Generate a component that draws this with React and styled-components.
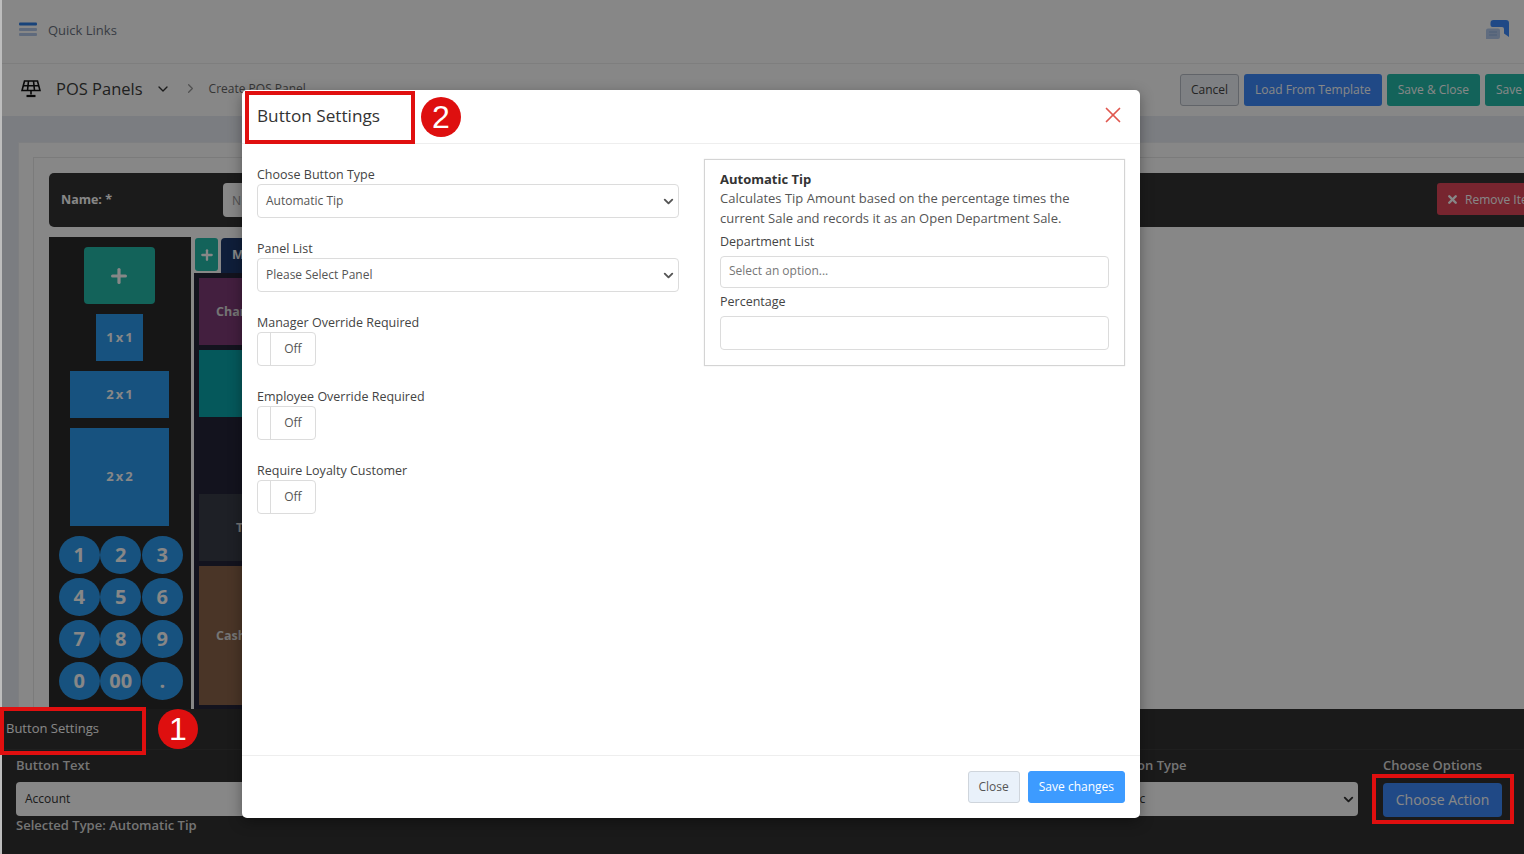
import React from "react";
import styled, { createGlobalStyle } from "styled-components";
import { ChevronDown, ChevronRight, X, Plus } from "lucide-react";

const GlobalStyle = createGlobalStyle`
    * {
        box-sizing: border-box;
    }
    html,
    body {
        margin: 0;
        padding: 0;
        height: 854px;
        overflow: hidden;
        background: #fff;
        font-family: "Open Sans", "Liberation Sans", sans-serif;
    }
`;

const Page = styled.div`
    position: relative;
    width: 1524px;
    height: 854px;
    padding-left: 2px;
    overflow: hidden;
    display: flex;
    flex-direction: column;
    background: #bdbdbd;
`;

const TopBar = styled.div`
    height: 64px;
    flex: none;
    display: flex;
    align-items: center;
    justify-content: space-between;
    padding: 0 14px 4px 17px;
    background: #fff;
    border-bottom: 1px solid #eee;
`;

const QuickLinks = styled.div`
    display: flex;
    align-items: center;
    gap: 11px;
    font-size: 13px;
    color: #6b7280;
`;

const SubBar = styled.div`
    height: 52px;
    flex: none;
    display: flex;
    align-items: center;
    justify-content: space-between;
    padding-left: 19px;
    background: #fff;
`;

const Crumbs = styled.div`
    display: flex;
    align-items: center;
    margin-bottom: 3px;
    color: #333;
`;

const PageTitle = styled.span`
    font-size: 16.5px;
    margin: 0 12px 0 15px;
    color: #3d3d3d;
`;

const CrumbChevron = styled(ChevronRight)`
    margin-left: 12px;
`;

const CrumbText = styled.span`
    font-size: 12px;
    color: #666;
    margin-left: 11px;
`;

const Actions = styled.div`
    display: flex;
    gap: 5px;
    width: 344px;
    flex: none;
    overflow: hidden;
`;

const TopButton = styled.div`
    height: 32px;
    padding: 0 10px 2px;
    flex: none;
    display: flex;
    align-items: center;
    font-size: 12px;
    border-radius: 3px;
    color: ${(p) => (p.$variant === "light" ? "#444" : "#fff")};
    background: ${(p) =>
        p.$variant === "blue"
            ? "#3d8bfd"
            : p.$variant === "teal"
            ? "#24bcab"
            : "#eef2f7"};
    border: 1px solid ${(p) => (p.$variant === "light" ? "#b8bdc6" : "transparent")};
`;

const Content = styled.div`
    flex: 1;
    min-height: 0;
    background: #e9edf3;
    padding: 26px 0 0 16px;
`;

const Card = styled.div`
    height: 100%;
    background: #fff;
    border: 1px solid #eef0f3;
    border-right: none;
    border-bottom: none;
    padding: 14px 0 0 14px;
`;

const InnerCard = styled.div`
    height: 100%;
    background: #fff;
    border: 1px solid #e8e8e8;
    border-right: none;
    border-bottom: none;
    padding: 15px 0 0 15px;
`;

const NameBar = styled.div`
    height: 54px;
    display: flex;
    align-items: center;
    justify-content: space-between;
    background: #343434;
    border-radius: 5px 0 0 5px;
    padding-left: 12px;
`;

const NameLabel = styled.span`
    width: 162px;
    padding-bottom: 2px;
    font-size: 12.5px;
    font-weight: 700;
    color: #fff;
`;

const NameField = styled.div`
    flex: none;
    width: 40px;
    height: 34px;
    padding-left: 9px;
    display: flex;
    align-items: center;
    font-size: 12px;
    color: #999;
    background: #fff;
    border-radius: 4px 0 0 4px;
`;

const RemoveButton = styled.div`
    width: 87px;
    height: 32px;
    margin: 0 0 2px auto;
    padding-left: 9px;
    display: flex;
    align-items: center;
    gap: 6px;
    white-space: nowrap;
    overflow: hidden;
    font-size: 12px;
    color: #fff;
    background: #e0465a;
    border-radius: 3px 0 0 3px;
`;

const RemoveIcon = styled(X)`
    flex: none;
`;

const Editor = styled.div`
    margin-top: 10px;
    display: flex;
    height: 472px;
`;

const Palette = styled.div`
    width: 142px;
    flex: none;
    background: #2b2b2b;
    display: flex;
    flex-direction: column;
    align-items: center;
    padding: 10px 2px 0 0;
`;

const AddTile = styled.div`
    width: 71px;
    height: 57px;
    display: flex;
    align-items: center;
    justify-content: center;
    color: #fff;
    background: #24bcab;
    border-radius: 4px;
`;

const SizeTile = styled.div`
    width: ${(p) => p.$w}px;
    height: ${(p) => p.$h}px;
    margin-top: 10px;
    padding: 0 0 2px 3px;
    display: flex;
    align-items: center;
    justify-content: center;
    font-size: 13px;
    font-weight: 700;
    letter-spacing: 2px;
    color: #fff;
    background: #2d9cf0;
`;

const NumPad = styled.div`
    margin: 10px 0 0 4px;
    display: grid;
    grid-template-columns: repeat(3, 41.5px);
    grid-auto-rows: 38px;
    row-gap: 4px;
    justify-content: center;
`;

const NumKey = styled.div`
    width: 41px;
    height: 38px;
    padding-bottom: 1px;
    display: flex;
    align-items: center;
    justify-content: center;
    font-size: 20px;
    font-weight: 700;
    color: #fff;
    background: #2d9cf0;
    border-radius: 50%;
`;

const Divider = styled.div`
    width: 3px;
    flex: none;
    background: #fff;
`;

const TileColumn = styled.div`
    width: 800px;
    flex: none;
    display: flex;
    flex-direction: column;
    overflow: hidden;
`;

const TabRow = styled.div`
    height: 36px;
    flex: none;
    display: flex;
    gap: 3px;
    padding: 1px 0 0 1px;
    background: #fff;
`;

const AddTab = styled.div`
    width: 23px;
    height: 33px;
    display: flex;
    align-items: center;
    justify-content: center;
    color: #fff;
    background: #24bcab;
    border-radius: 3px;
`;

const MenuTab = styled.div`
    width: 60px;
    height: 35px;
    padding: 0 0 3px 11px;
    display: flex;
    align-items: center;
    font-size: 13px;
    font-weight: 700;
    color: #fff;
    background: #1d3a6e;
    border-radius: 4px 4px 0 0;
`;

const TileGrid = styled.div`
    flex: 1;
    display: flex;
    flex-direction: column;
    gap: 5px;
    padding: 5px 0 5px 5px;
    background: #24243a;
`;

const Tile = styled.div`
    height: ${(p) => p.$h}px;
    flex: none;
    padding-left: ${(p) => p.$pad || 17}px;
    display: flex;
    align-items: center;
    white-space: nowrap;
    font-size: 12.5px;
    font-weight: 700;
    color: #ddd;
    background: ${(p) => p.$bg};
`;

const BottomPanel = styled.div`
    height: 145px;
    flex: none;
    background: #323232;
`;

const PanelHead = styled.div`
    height: 41px;
    padding: 0 0 2px 4px;
    display: flex;
    align-items: center;
    font-size: 13px;
    color: #fff;
    border-bottom: 1px solid #3c3c3c;
`;

const PanelBody = styled.div`
    display: flex;
    padding: 5px 22px 0 14px;
`;

const PanelColumn = styled.div`
    width: ${(p) => p.$w}px;
    margin-left: ${(p) => p.$ml || 0};
    flex: none;
`;

const PanelLabel = styled.div`
    height: 20px;
    padding-left: ${(p) => p.$indent || 0}px;
    display: flex;
    align-items: center;
    font-size: 13px;
    font-weight: 600;
    color: #ddd;
    white-space: nowrap;
`;

const PanelInput = styled.div`
    height: 34px;
    margin: 7px 0 0;
    padding: 0 2px 2px 9px;
    display: flex;
    align-items: center;
    justify-content: space-between;
    font-size: 12px;
    color: #333;
    background: #fff;
    border-radius: 4px;
`;

const SelectedType = styled(PanelLabel)`
    height: 18px;
`;

const ActionButton = styled.div`
    height: 34px;
    margin-top: 8px;
    padding-bottom: 2px;
    display: flex;
    align-items: center;
    justify-content: center;
    font-size: 14px;
    color: #fff;
    background: #3d8bfd;
    border-radius: 4px;
`;

const Backdrop = styled.div`
    position: absolute;
    inset: 0 0 0 2px;
    background: rgba(0, 0, 0, 0.47);
`;

const Modal = styled.div`
    position: absolute;
    left: 242px;
    top: 90px;
    width: 898px;
    height: 728px;
    display: flex;
    flex-direction: column;
    background: #fff;
    border-radius: 5px;
    box-shadow: 0 4px 14px rgba(0, 0, 0, 0.35);
`;

const ModalHead = styled.div`
    height: 54px;
    flex: none;
    display: flex;
    align-items: center;
    justify-content: space-between;
    padding: 0 14px 0 15px;
    border-bottom: 1px solid #eeeeee;
`;

const ModalTitle = styled.h5`
    margin: 0 0 2px;
    font-size: 17.2px;
    font-weight: 400;
    color: #333;
`;

const CloseIcon = styled(X)`
    margin-bottom: 3px;
    color: #e0574f;
`;

const ModalBody = styled.div`
    flex: 1;
    min-height: 0;
    display: grid;
    grid-template-columns: 422px 421px;
    column-gap: 25px;
    padding: 15px 15px 0;
`;

const Field = styled.div`
    height: 74px;
    padding-top: 7px;
`;

const FieldLabel = styled.div`
    height: 17px;
    display: flex;
    align-items: center;
    font-size: 12.5px;
    color: #444;
`;

const SelectBox = styled.div`
    height: 34px;
    margin-top: 1px;
    padding: 0 2px 2px 8px;
    display: flex;
    align-items: center;
    justify-content: space-between;
    font-size: 12px;
    color: #555;
    background: #fff;
    border: 1px solid #dcdcdc;
    border-radius: 4px;
`;

const SelectArrow = styled(ChevronDown)`
    margin-top: 2px;
`;

const Toggle = styled.div`
    width: 59px;
    height: 34px;
    margin-top: 1px;
    display: flex;
    border: 1px solid #dcdcdc;
    border-radius: 4px;
`;

const ToggleKnob = styled.div`
    width: 13px;
    flex: none;
    border-right: 1px solid #dcdcdc;
`;

const ToggleText = styled.div`
    flex: 1;
    padding-bottom: 2px;
    display: flex;
    align-items: center;
    justify-content: center;
    font-size: 12px;
    color: #555;
`;

const InfoBox = styled.div`
    height: 207px;
    padding: 10px 15px 0;
    border: 1px solid #d4d4d4;
    box-shadow: 0 0 1px #ddd;
`;

const InfoTitle = styled.div`
    font-size: 13px;
    line-height: 18px;
    font-weight: 700;
    color: #333;
`;

const InfoText = styled.div`
    font-size: 13px;
    line-height: 20px;
    color: #555;
`;

const InfoLabel = styled.div`
    margin-top: ${(p) => p.$mt}px;
    font-size: 12.5px;
    line-height: 18px;
    color: #444;
`;

const InfoInput = styled.div`
    height: ${(p) => p.$h}px;
    margin-top: 5px;
    padding: 0 8px 3px;
    display: flex;
    align-items: center;
    font-size: 12px;
    color: #777;
    border: 1px solid #dcdcdc;
    border-radius: 4px;
`;

const ModalFoot = styled.div`
    height: 63px;
    flex: none;
    display: flex;
    align-items: center;
    justify-content: flex-end;
    gap: 8px;
    padding: 0 15px;
    border-top: 1px solid #eeeeee;
`;

const FootButton = styled.div`
    height: 32px;
    padding: 0 10px 1px;
    display: flex;
    align-items: center;
    font-size: 12px;
    color: ${(p) => (p.$primary ? "#fff" : "#555")};
    background: ${(p) => (p.$primary ? "#3d9bff" : "#e9f1fa")};
    border: 1px solid ${(p) => (p.$primary ? "#3d9bff" : "#cfd5dc")};
    border-radius: 3px;
`;

const Callout = styled.div`
    position: absolute;
    left: ${(p) => p.$x}px;
    top: ${(p) => p.$y}px;
    width: ${(p) => p.$w}px;
    height: ${(p) => p.$h}px;
    border: 4px solid #e00f0f;
`;

const Badge = styled.div`
    position: absolute;
    left: ${(p) => p.$x}px;
    top: ${(p) => p.$y}px;
    width: 40px;
    height: 40px;
    display: flex;
    align-items: center;
    justify-content: center;
    font-family: "Liberation Sans", sans-serif;
    font-size: 32px;
    color: #fff;
    background: #de0f0f;
    border-radius: 50%;
`;

function MenuIcon() {
    return (
        <svg width="18" height="15" viewBox="0 0 18 15">
            <rect y="0.5" width="18" height="3" rx="1" fill="#2f7fe6" />
            <rect y="6" width="18" height="3" rx="1" fill="#b3c9ea" />
            <rect y="11" width="18" height="3" rx="1" fill="#b3c9ea" />
        </svg>
    );
}

function PanelsIcon() {
    return (
        <svg width="20" height="18" viewBox="0 0 20 18" fill="none" stroke="#111" strokeWidth="1.6">
            <path d="M3.5 1h13l2.5 9.5H1z" />
            <path d="M2 5.7h16M7.5 1L6.5 10.5M12.5 1l1 9.5" />
            <path d="M10 10.5v4" />
            <path d="M5.5 16h9" strokeWidth="2.2" />
        </svg>
    );
}

function ChatIcon() {
    return (
        <svg width="24" height="20" viewBox="0 0 24 20">
            <path d="M4.5 3a3 3 0 0 1 3-3H20a3 3 0 0 1 3 3v14l-5-3.5V9a2 2 0 0 0-2-2H6.5a2 2 0 0 1-2-2z" fill="#3d8bfd" />
            <path d="M2 8.500h10a2 2 0 0 1 2 2V17a2 2 0 0 1-2 2H0v-8.500a2 2 0 0 1 2-2z" fill="#b5cdf0" />
            <path d="M3 12h8M3 15h8" stroke="#8fb1e0" strokeWidth="1" />
        </svg>
    );
}

const numKeys = ["1", "2", "3", "4", "5", "6", "7", "8", "9", "0", "00", "."];

function ToggleField({ label }) {
    return (
        <Field>
            <FieldLabel>{label}</FieldLabel>
            <Toggle>
                <ToggleKnob />
                <ToggleText>Off</ToggleText>
            </Toggle>
        </Field>
    );
}

export default function App() {
    return (
        <Page>
            <GlobalStyle />
            <TopBar>
                <QuickLinks>
                    <MenuIcon />
                    Quick Links
                </QuickLinks>
                <ChatIcon />
            </TopBar>
            <SubBar>
                <Crumbs>
                    <PanelsIcon />
                    <PageTitle>POS Panels</PageTitle>
                    <ChevronDown size={16} />
                    <CrumbChevron size={15} color="#999" />
                    <CrumbText>Create POS Panel</CrumbText>
                </Crumbs>
                <Actions>
                    <TopButton $variant="light">Cancel</TopButton>
                    <TopButton $variant="blue">Load From Template</TopButton>
                    <TopButton $variant="teal">Save &amp; Close</TopButton>
                    <TopButton $variant="teal">Save</TopButton>
                </Actions>
            </SubBar>
            <Content>
                <Card>
                    <InnerCard>
                        <NameBar>
                            <NameLabel>Name: *</NameLabel>
                            <NameField>N</NameField>
                            <RemoveButton>
                                <RemoveIcon size={13} strokeWidth={4.5} />
                                Remove Item
                            </RemoveButton>
                        </NameBar>
                        <Editor>
                            <Palette>
                                <AddTile>
                                    <Plus size={22} strokeWidth={3.5} />
                                </AddTile>
                                <SizeTile $w={47} $h={47}>1x1</SizeTile>
                                <SizeTile $w={99} $h={47}>2x1</SizeTile>
                                <SizeTile $w={99} $h={98}>2x2</SizeTile>
                                <NumPad>
                                    {numKeys.map((key) => (
                                        <NumKey key={key}>{key}</NumKey>
                                    ))}
                                </NumPad>
                            </Palette>
                            <Divider />
                            <TileColumn>
                                <TabRow>
                                    <AddTab>
                                        <Plus size={16} strokeWidth={3.5} />
                                    </AddTab>
                                    <MenuTab>M</MenuTab>
                                </TabRow>
                                <TileGrid>
                                    <Tile $h={67} $bg="#7f3c77">Change</Tile>
                                    <Tile $h={67} $bg="#0aa6ac" />
                                    <Tile $h={67} $bg="#24243a" />
                                    <Tile $h={67} $bg="#3a3d48" $pad={37}>Tip</Tile>
                                    <Tile $h={139} $bg="#8c644a">Cash</Tile>
                                </TileGrid>
                            </TileColumn>
                        </Editor>
                    </InnerCard>
                </Card>
            </Content>
            <BottomPanel>
                <PanelHead>Button Settings</PanelHead>
                <PanelBody>
                    <PanelColumn $w={300}>
                        <PanelLabel>Button Text</PanelLabel>
                        <PanelInput>Account</PanelInput>
                        <SelectedType>Selected Type: Automatic Tip</SelectedType>
                    </PanelColumn>
                    <PanelColumn $w={279} $ml="763px">
                        <PanelLabel $indent={31}>Button Type</PanelLabel>
                        <PanelInput>
                            Automatic
                            <SelectArrow size={15} strokeWidth={3} />
                        </PanelInput>
                    </PanelColumn>
                    <PanelColumn $w={119} $ml="25px">
                        <PanelLabel>Choose Options</PanelLabel>
                        <ActionButton>Choose Action</ActionButton>
                    </PanelColumn>
                </PanelBody>
            </BottomPanel>

            <Backdrop />
            <Modal>
                <ModalHead>
                    <ModalTitle>Button Settings</ModalTitle>
                    <CloseIcon size={26} strokeWidth={1.6} />
                </ModalHead>
                <ModalBody>
                    <div>
                        <Field>
                            <FieldLabel>Choose Button Type</FieldLabel>
                            <SelectBox>
                                Automatic Tip
                                <SelectArrow size={15} strokeWidth={3} />
                            </SelectBox>
                        </Field>
                        <Field>
                            <FieldLabel>Panel List</FieldLabel>
                            <SelectBox>
                                Please Select Panel
                                <SelectArrow size={15} strokeWidth={3} />
                            </SelectBox>
                        </Field>
                        <ToggleField label="Manager Override Required" />
                        <ToggleField label="Employee Override Required" />
                        <ToggleField label="Require Loyalty Customer" />
                    </div>
                    <InfoBox>
                        <InfoTitle>Automatic Tip</InfoTitle>
                        <InfoText>
                            Calculates Tip Amount based on the percentage times the
                            <br />
                            current Sale and records it as an Open Department Sale.
                        </InfoText>
                        <InfoLabel $mt={5}>Department List</InfoLabel>
                        <InfoInput $h={32}>Select an option...</InfoInput>
                        <InfoLabel $mt={5}>Percentage</InfoLabel>
                        <InfoInput $h={34} />
                    </InfoBox>
                </ModalBody>
                <ModalFoot>
                    <FootButton>Close</FootButton>
                    <FootButton $primary>Save changes</FootButton>
                </ModalFoot>
            </Modal>

            <Callout $x={0} $y={707} $w={146} $h={48} />
            <Badge $x={158} $y={709}>1</Badge>
            <Callout $x={245} $y={91} $w={170} $h={53} />
            <Badge $x={421} $y={97}>2</Badge>
            <Callout $x={1372} $y={774} $w={142} $h={50} />
        </Page>
    );
}
